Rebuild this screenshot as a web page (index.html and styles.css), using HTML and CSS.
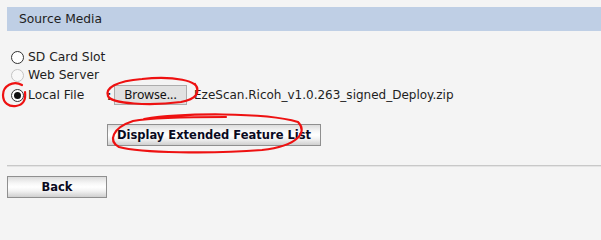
FILE: index.html
```html
<!DOCTYPE html>
<html>
<head>
<meta charset="utf-8">
<link rel="stylesheet" href="styles.css">
</head>
<body>
<div class="page">
  <div class="section-head">Source Media</div>
  <div class="options">
    <div class="opt"><span class="radio"></span><span class="lbl">SD Card Slot</span></div>
    <div class="opt"><span class="radio disabled"></span><span class="lbl">Web Server</span></div>
    <div class="opt file-row">
      <span class="radio checked"></span><span class="lbl fixed">Local File</span>
      <span class="colon">:</span>
      <button class="browse">Browse...</button>
      <span class="filename">EzeScan.Ricoh_v1.0.263_signed_Deploy.zip</span>
    </div>
  </div>
  <div class="ext-row"><button class="btn ext">Display Extended Feature List</button></div>
  <div class="divider"></div>
  <button class="btn back">Back</button>
  <svg class="annot" width="601" height="240" viewBox="0 0 601 240">
    <path d="M22 85 C 13 80, 3 86, 3 95 C 3 103, 9 107, 16 106 C 23 105, 26 100, 25 92" />
    <path d="M197 91 C 201 80, 172 76, 142 79 C 116 81, 105 88, 108 96 C 111 104, 150 106, 181 102 C 196 99, 201 93, 195 84" />
    <path d="M144 119 C 182 113, 264 112, 298 122 C 308 132, 298 146, 262 150 C 212 154, 140 153, 119 147 C 108 141, 112 128, 133 121 C 150 118, 172 117, 226 117" />
  </svg>
</div>
</body>
</html>
```
FILE: styles.css
```css
html, body {
  margin: 0;
  padding: 0;
  background: #f4f4f4;
}
.page {
  position: relative;
  width: 601px;
  height: 240px;
  overflow: hidden;
  padding: 7px 0 0 7px;
  box-sizing: border-box;
  font-family: "DejaVu Sans", Verdana, sans-serif;
  color: #1e1e1e;
}
.section-head {
  height: 24px;
  line-height: 24px;
  background: #bfcfe5;
  padding-left: 12px;
  font-size: 12.3px;
}
.options {
  margin-top: 17px;
  display: flex;
  flex-direction: column;
}
.opt {
  display: flex;
  align-items: center;
  height: 18px;
  font-size: 12.3px;
}
.file-row {
  height: 20px;
  margin-top: 1px;
}
.radio {
  box-sizing: border-box;
  width: 13px;
  height: 13px;
  border-radius: 50%;
  border: 1px solid #333;
  background: #fff;
  margin-left: 4px;
  margin-right: 4px;
  display: flex;
  align-items: center;
  justify-content: center;
}
.radio.disabled {
  border-color: #c4c4c4;
  background: #f8f8f8;
}
.radio.checked::after {
  content: "";
  width: 7px;
  height: 7px;
  border-radius: 50%;
  background: #111;
}
.lbl.fixed {
  width: 79px;
}
.colon {
  font-family: "Liberation Sans", Arial, sans-serif;
  font-size: 13px;
  font-weight: bold;
  width: 7px;
}
.browse {
  box-sizing: border-box;
  height: 20px;
  width: 73px;
  padding: 0;
  margin: 0;
  border: 1px solid #adadad;
  background: #e1e1e1;
  font-family: "Noto Sans", sans-serif;
  font-size: 12.3px;
  color: #111;
  line-height: 18px;
}
.filename {
  margin-left: 7px;
  font-size: 12px;
}
.ext-row {
  margin-top: 19px;
  padding-left: 100px;
}
.btn {
  box-sizing: border-box;
  height: 22px;
  border: 1px solid #8f8f8f;
  background: linear-gradient(#dcdcdc, #f6f6f6 30%, #ffffff 50%, #f2f2f2 70%, #cfcfcf);
  font-family: "DejaVu Sans", Verdana, sans-serif;
  font-weight: bold;
  font-size: 11.5px;
  color: #0a0a1e;
  padding: 0;
  margin: 0;
  display: block;
}
.ext {
  width: 214px;
}
.divider {
  margin-top: 19px;
  height: 1px;
  background: #c8c8c8;
  border-bottom: 1px solid #e4e4e4;
}
.back {
  margin-top: 9px;
  width: 100px;
}
.annot {
  position: absolute;
  left: 0;
  top: 0;
  pointer-events: none;
}
.annot path {
  fill: none;
  stroke: #ee1111;
  stroke-width: 2.2;
  stroke-linecap: round;
}
```
